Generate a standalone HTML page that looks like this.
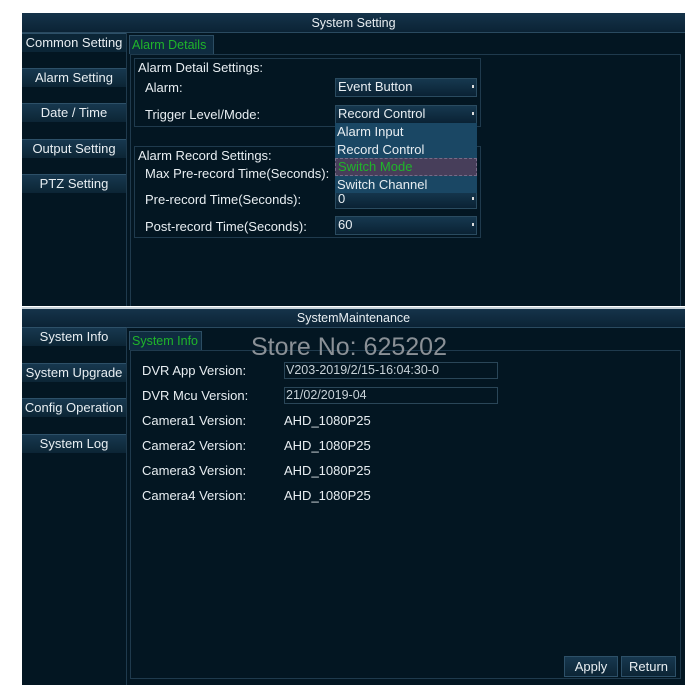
<!DOCTYPE html>
<html><head><meta charset="utf-8"><style>
*{margin:0;padding:0;box-sizing:border-box}
body{width:700px;height:700px;background:#fff;position:relative;overflow:hidden;font-family:"Liberation Sans",sans-serif;color:#e8eef2}
.a{position:absolute;white-space:nowrap}
.panel{background:#031622}
.title{background:linear-gradient(#15334a,#0b2335);border-bottom:1px solid #2a4a60;text-align:center;font-size:12.5px;line-height:20px}
.btn{background:linear-gradient(#17384f,#0c2535);border-top:1px solid #2d5068;text-align:center;font-size:13px;line-height:18px;height:19px;width:104px;left:22px}
.tab{background:#0f2c40;border:1px solid #2c4d63;border-bottom:none;color:#1fb52a;font-size:12.5px;line-height:18px;padding-left:2px}
.box{border:1px solid #1f3a4d}
.lbl{font-size:13px}
.dd{background:linear-gradient(#16384f,#0a2234);border:1px solid #2a4b60;font-size:13px;line-height:16px;padding-left:2px;width:142px;height:19px}
.dd:after{content:"";position:absolute;right:2px;top:6px;width:2px;height:3px;background:#ddd}
.val{border:1px solid #2a4658;font-size:12.5px;line-height:15px;padding-left:1px;color:#c8d2d8}
.vline{background:#1f3a4d;width:1px}
</style></head><body>
<div class="a panel" style="left:22px;top:13px;width:663px;height:293px"></div>
<div class="a title" style="left:22px;top:13px;width:663px;height:20px">System Setting</div>
<div class="a vline" style="left:126px;top:33px;height:273px"></div>
<div class="a btn" style="top:33px;background:#0b2536">Common Setting</div>
<div class="a btn" style="top:68px">Alarm Setting</div>
<div class="a btn" style="top:103px">Date / Time</div>
<div class="a btn" style="top:139px">Output Setting</div>
<div class="a btn" style="top:174px">PTZ Setting</div>
<div class="a tab" style="left:129px;top:35px;width:85px;height:19px">Alarm Details</div>
<div class="a box" style="left:130px;top:54px;width:551px;height:252px;border-bottom:none"></div>
<div class="a box" style="left:134px;top:58px;width:347px;height:69px"></div>
<div class="a lbl" style="left:138px;top:60px">Alarm Detail Settings:</div>
<div class="a lbl" style="left:145px;top:80px">Alarm:</div>
<div class="a lbl" style="left:145px;top:107px">Trigger Level/Mode:</div>
<div class="a dd" style="left:335px;top:78px">Event Button</div>
<div class="a dd" style="left:335px;top:105px">Record Control</div>
<div class="a box" style="left:134px;top:146px;width:347px;height:92px"></div>
<div class="a lbl" style="left:138px;top:148px">Alarm Record Settings:</div>
<div class="a lbl" style="left:145px;top:166px">Max Pre-record Time(Seconds):</div>
<div class="a lbl" style="left:145px;top:192px">Pre-record Time(Seconds):</div>
<div class="a lbl" style="left:145px;top:219px">Post-record Time(Seconds):</div>
<div class="a dd" style="left:335px;top:190px">0</div>
<div class="a dd" style="left:335px;top:216px">60</div>
<div class="a" style="left:335px;top:123px;width:142px;height:70px;background:#1a4764;font-size:13px;line-height:17.5px;padding-left:2px">
Alarm Input<br>Record Control<br><span style="display:block;margin-left:-2px;padding-left:2px;background:#473e5a;border:1px dashed #776c88;color:#1fb52a;line-height:16px">Switch Mode</span>Switch Channel</div>
<div class="a panel" style="left:22px;top:309px;width:663px;height:376px"></div>
<div class="a" style="left:22px;top:307px;width:663px;height:2px;background:#c9d3da"></div>
<div class="a title" style="left:22px;top:309px;width:663px;height:19px;line-height:19px">SystemMaintenance</div>
<div class="a vline" style="left:126px;top:328px;height:357px"></div>
<div class="a btn" style="top:327px">System Info</div>
<div class="a btn" style="top:363px">System Upgrade</div>
<div class="a btn" style="top:398px">Config Operation</div>
<div class="a btn" style="top:434px">System Log</div>
<div class="a tab" style="left:129px;top:331px;width:73px;height:19px">System Info</div>
<div class="a box" style="left:130px;top:350px;width:551px;height:329px"></div>
<div class="a" style="left:251px;top:333px;font-family:'Liberation Sans',sans-serif;font-size:25px;color:#8a9096">Store No: 625202</div>
<div class="a lbl" style="left:142px;top:363px">DVR App Version:</div>
<div class="a lbl" style="left:142px;top:388px">DVR Mcu Version:</div>
<div class="a lbl" style="left:142px;top:413px">Camera1 Version:</div>
<div class="a lbl" style="left:142px;top:438px">Camera2 Version:</div>
<div class="a lbl" style="left:142px;top:463px">Camera3 Version:</div>
<div class="a lbl" style="left:142px;top:488px">Camera4 Version:</div>
<div class="a val" style="left:284px;top:362px;width:214px;height:17px">V203-2019/2/15-16:04:30-0</div>
<div class="a val" style="left:284px;top:387px;width:214px;height:17px">21/02/2019-04</div>
<div class="a lbl" style="left:284px;top:413px">AHD_1080P25</div>
<div class="a lbl" style="left:284px;top:438px">AHD_1080P25</div>
<div class="a lbl" style="left:284px;top:463px">AHD_1080P25</div>
<div class="a lbl" style="left:284px;top:488px">AHD_1080P25</div>
<div class="a btn" style="left:564px;top:656px;width:54px;height:21px;line-height:20px;border:1px solid #2d5068">Apply</div>
<div class="a btn" style="left:621px;top:656px;width:55px;height:21px;line-height:20px;border:1px solid #2d5068">Return</div>
</body></html>
